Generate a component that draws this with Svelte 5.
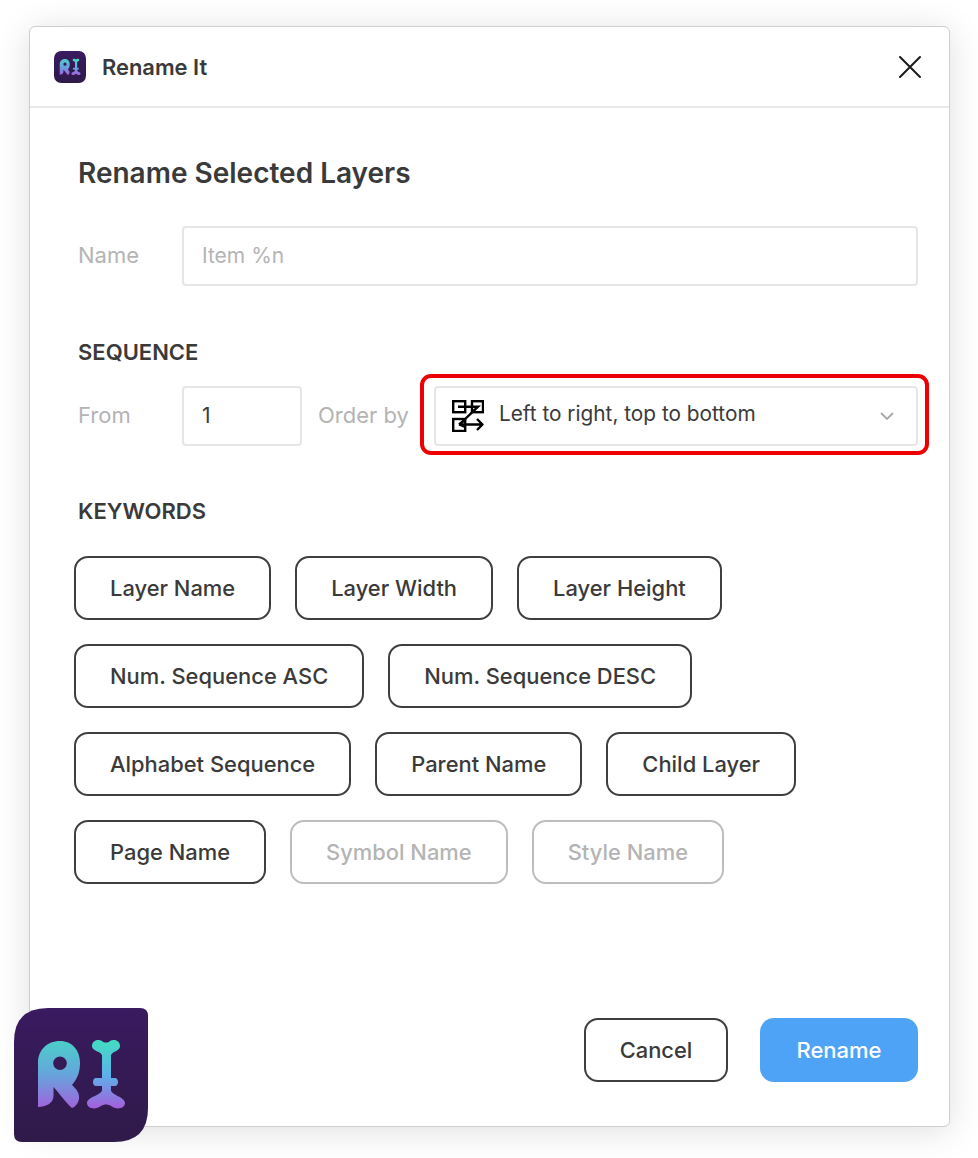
<script>
  let name = $state('');
  let from = $state('1');

  const keywordRows = [
    [{ label: 'Layer Name' }, { label: 'Layer Width' }, { label: 'Layer Height' }],
    [{ label: 'Num. Sequence ASC' }, { label: 'Num. Sequence DESC' }],
    [{ label: 'Alphabet Sequence' }, { label: 'Parent Name' }, { label: 'Child Layer' }],
    [{ label: 'Page Name' }, { label: 'Symbol Name', off: true }, { label: 'Style Name', off: true }]
  ];
</script>

{#snippet logoMark(id, round)}
  <svg class="mark" viewBox="0 0 134 134" aria-hidden="true">
    <defs>
      <linearGradient id="{id}-bg" x1="0" y1="0" x2="0" y2="1">
        <stop offset="0" stop-color="#3a1a60" />
        <stop offset="1" stop-color="#2f1a49" />
      </linearGradient>
      <linearGradient id="{id}-r" gradientUnits="userSpaceOnUse" x1="0" y1="33" x2="0" y2="100">
        <stop offset="0" stop-color="#4bcfc8" />
        <stop offset="0.5" stop-color="#66a4dc" />
        <stop offset="1" stop-color="#a163dc" />
      </linearGradient>
      <linearGradient id="{id}-i" gradientUnits="userSpaceOnUse" x1="0" y1="33" x2="0" y2="100">
        <stop offset="0" stop-color="#42dcc2" />
        <stop offset="0.5" stop-color="#5cb2ea" />
        <stop offset="1" stop-color="#a45fdc" />
      </linearGradient>
    </defs>
    {#if round}
      <rect width="134" height="134" rx="30" fill="url(#{id}-bg)" />
    {:else}
      <path d="M34 0H126Q134 0 134 8V100Q134 134 100 134H8Q0 134 0 126V34Q0 0 34 0Z" fill="url(#{id}-bg)" />
    {/if}
    <path
      fill="url(#{id}-r)"
      fill-rule="evenodd"
      d="M24 99V55C24 42 33 33 46 33C58 33 66 42 66 55C66 65 63 71 58 77C62 81 66 85 65 91C64 96 61 99 58 100C52 95 46 86 39.5 79V88C39.5 95 32 99 24 99ZM46 48.500A6.800 6.800 0 1 0 46 62.100A6.800 6.800 0 1 0 46 48.500Z"
    />
    <path
      fill="url(#{id}-i)"
      d="M78 38C78 32 85 31 88 33C90 35 94 35 96 33C99 31 106 32 106 38C106 43 99 43 97 47V70H101C105 70 105 78 101 78H97V82C97 87 111 89 111 95C111 101 102 102 97 98C94 96 90 96 87 98C82 102 73 101 73 95C73 89 88 87 88 82V78H82C78 78 78 70 82 70H88V47C86 43 78 43 78 38Z"
    />
  </svg>
{/snippet}

<div class="page">
  <div class="window">
    <header class="titlebar">
      <div class="small-logo">{@render logoMark('small', true)}</div>
      <span class="app-name">Rename It</span>
      <button class="close" aria-label="Close">
        <svg width="24" height="24" viewBox="0 0 24 24" fill="none" stroke="#1a1a1a" stroke-width="2" stroke-linecap="round">
          <path d="M2 2L22 22M22 2L2 22" />
        </svg>
      </button>
    </header>

    <main class="content">
      <h1>Rename Selected Layers</h1>

      <div class="row name-row">
        <label class="field-label" for="name">Name</label>
        <input id="name" class="name-input" placeholder="Item %n" bind:value={name} />
      </div>

      <h2 class="seq-title">SEQUENCE</h2>
      <div class="row seq-row">
        <label class="field-label" for="from">From</label>
        <input id="from" class="from-input" bind:value={from} />
        <span class="field-label order-label">Order by</span>
        <div class="select">
          <svg class="order-icon" width="32" height="32" viewBox="0 0 32 32" fill="none" stroke="#000" stroke-width="2.400">
            <rect x="1.200" y="1.200" width="12" height="11" />
            <rect x="20" y="1.200" width="11" height="11" />
            <rect x="1.200" y="19" width="12" height="12" />
            <path d="M6 6.700H26L8 24" />
            <path d="M8 24.500H30M25 19L30.500 24.500L25 30" stroke-linejoin="round" />
            <path d="M7 24.500L13 20M7 24.500L13 27" />
          </svg>
          <span class="select-text">Left to right, top to bottom</span>
          <svg class="chevron" width="14" height="8" viewBox="0 0 14 8" fill="none" stroke="#a9a9a9" stroke-width="1.800">
            <path d="M1 1L7 7L13 1" />
          </svg>
          <div class="highlight"></div>
        </div>
      </div>

      <h2 class="key-title">KEYWORDS</h2>
      <div class="keywords">
        {#each keywordRows as row}
          <div class="key-row">
            {#each row as key}
              <button class="key" class:off={key.off}>{key.label}</button>
            {/each}
          </div>
        {/each}
      </div>

      <footer class="actions">
        <button class="key cancel">Cancel</button>
        <button class="rename">Rename</button>
      </footer>
    </main>
  </div>

  <div class="big-logo">{@render logoMark('big', false)}</div>
</div>

<style>
  :global(body) {
    background: #fff;
  }

  .page {
    position: relative;
    width: 978px;
    height: 1158px;
    padding: 26px 28px 0 29px;
    box-sizing: border-box;
    font-family: Inter, "Liberation Sans", sans-serif;
    color: #3a3a3a;
    overflow: hidden;
  }

  .window {
    height: 1101px;
    box-sizing: border-box;
    border: 1px solid #cfcfcf;
    border-radius: 6px;
    background: #fff;
    box-shadow: 0 4px 34px rgba(0, 0, 0, 0.13);
    display: flex;
    flex-direction: column;
  }

  .titlebar {
    height: 81px;
    box-sizing: border-box;
    flex: none;
    display: flex;
    align-items: center;
    padding: 0 27px 0 24px;
    border-bottom: 2px solid #e8e8e8;
  }

  .small-logo {
    width: 32px;
    height: 32px;
    margin-right: 16px;
  }

  .mark {
    display: block;
    width: 100%;
    height: 100%;
  }

  .app-name {
    font-size: 21.900px;
    font-weight: 600;
  }

  .close {
    margin-left: auto;
    padding: 0;
    border: none;
    background: none;
    line-height: 0;
  }

  .content {
    flex: 1;
    display: flex;
    flex-direction: column;
    padding: 48px 31px 44px 48px;
  }

  h1 {
    margin: 0 0 36px;
    font-size: 28px;
    line-height: 34px;
    font-weight: 600;
  }

  h2 {
    margin: 0;
    font-size: 22px;
    line-height: 26px;
    font-weight: 600;
  }

  .seq-title {
    margin-top: 53px;
    margin-bottom: 21px;
  }

  .key-title {
    margin-top: 52px;
    margin-bottom: 32px;
  }

  .row {
    display: flex;
    align-items: center;
  }

  .field-label {
    font-size: 22px;
    color: #b4b4b4;
    padding-bottom: 2px;
  }

  .name-row .field-label,
  .seq-row label {
    width: 104px;
    flex: none;
  }

  input {
    box-sizing: border-box;
    height: 60px;
    border: 2px solid #e6e6e6;
    border-radius: 4px;
    padding: 0 18px 2px;
    font: inherit;
    font-size: 21px;
    color: #3a3a3a;
    outline: none;
  }

  input::placeholder {
    color: #b4b4b4;
  }

  .name-input {
    flex: 1;
    min-width: 0;
  }

  .from-input {
    width: 120px;
  }

  .order-label {
    margin-left: 16px;
    margin-right: 25px;
    white-space: nowrap;
  }

  .select {
    position: relative;
    flex: 1;
    height: 60px;
    box-sizing: border-box;
    display: flex;
    align-items: center;
    border: 2px solid #e6e6e6;
    border-radius: 4px;
    padding: 0 22px 0 16px;
  }

  .select-text {
    margin-left: 15px;
    padding-bottom: 5px;
    font-size: 20.800px;
  }

  .chevron {
    margin-left: auto;
  }

  .highlight {
    position: absolute;
    inset: -14px -13px -11px -16px;
    border: 4px solid #ee0000;
    border-radius: 11px;
    pointer-events: none;
  }

  .keywords {
    margin-left: -4px;
    display: flex;
    flex-direction: column;
    gap: 24px;
  }

  .key-row {
    display: flex;
    gap: 24px;
  }

  .key {
    height: 64px;
    padding: 0 34px;
    box-sizing: border-box;
    border: 2px solid #3f3f3f;
    border-radius: 14px;
    background: #fff;
    font: inherit;
    font-size: 21.920px;
    font-weight: 500;
    color: #3a3a3a;
  }

  .key.off {
    border-color: #bdbdbd;
    color: #b4b4b4;
  }

  .cancel {
    width: 144px;
    padding: 0;
  }

  .actions {
    margin-top: auto;
    display: flex;
    justify-content: flex-end;
    gap: 32px;
  }

  .rename {
    height: 64px;
    width: 158px;
    border: none;
    border-radius: 14px;
    background: #4fa3f7;
    color: #fff;
    font: inherit;
    font-size: 22px;
    font-weight: 500;
  }

  .big-logo {
    position: absolute;
    left: 14px;
    top: 1008px;
    width: 134px;
    height: 134px;
  }
</style>
